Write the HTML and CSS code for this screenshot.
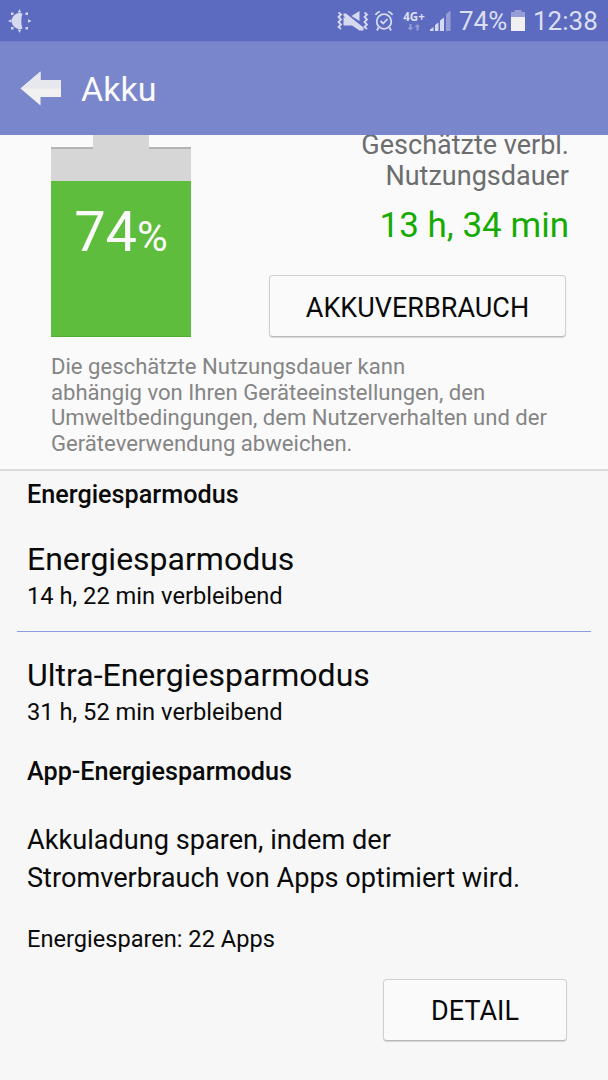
FILE: index.html
```
<!DOCTYPE html>
<html lang="de">
<head>
    <meta charset="UTF-8">
    <meta name="viewport" content="width=device-width, initial-scale=1.0">
    <title>Akku</title>
    <link rel="stylesheet" href="styles.css">
</head>
<body>
    <div class="status-bar">
        <svg class="brightness" width="24" height="24" viewBox="0 0 24 24">
            <path d="M14.500 4.500A8 8 0 1 0 14.500 19.500Q12 12 14.500 4.500Z"/>
            <path d="M11.500 0l1.700 3.500h-3.400zM11.500 24l1.700-3.500h-3.400zM0 12l3.500-1.700v3.400zM23.500 12l-3.500-1.700v3.400z"/>
            <path d="M3 3.500h2.500v2.500h-2.500zM3 18h2.500v2.500h-2.500zM17.500 3.500h2.500v2.500h-2.500zM17.500 18h2.500v2.500h-2.500z"/>
        </svg>
        <svg class="mute" width="32" height="24" viewBox="0 0 32 24">
            <path class="line" d="M1.500 3.500l2.500 2-2.500 2.500 2.500 2.500-2.500 2.500 2.500 2.500-2.500 2.500 2.500 2M27.500 3.500l2.500 2-2.500 2.500 2.500 2.500-2.500 2.500 2.500 2.500-2.500 2.500 2.500 2"/>
            <path d="M6.500 4.500H9L26.500 18.500V21.500H22.500L15 16.500H6.500V8.500H8.500L6.500 7zM22.500 2V12L14.500 7z"/>
        </svg>
        <svg class="alarm" width="20" height="24" viewBox="0 0 20 24">
            <circle class="line" cx="10" cy="12.500" r="7.300"/>
            <path class="line" d="M6.500 12l2.700 2.500 4.300-4.500M1.500 6Q2.500 3.500 6 2.500M18.500 6Q17.500 3.500 14 2.500M4.500 18.500L3 21.500M15.500 18.500L17 21.500"/>
        </svg>
        <div class="network">
            <span>4G+</span>
            <svg width="14" height="7" viewBox="0 0 14 7">
                <path d="M2.500 0h2v3.500h2l-3 3-3-3h2zM9.500 6.500h2V3h1.500l-2.500-3-3 3h2z"/>
            </svg>
        </div>
        <svg class="signal" width="22" height="22" viewBox="0 0 22 22">
            <path d="M0 21v-1.500l3.500-2.500v4zM5 21v-6l3.500-2.500V21zM10 21V10.500l4-3V21z"/>
            <path class="faint" d="M16 21V4L20.500 0.500V21z"/>
        </svg>
        <span class="percent">74%</span>
        <svg class="battery-icon" width="14" height="22" viewBox="0 0 14 22">
            <path class="faint" d="M0 2h3.500V0h7v2H14v5H0z"/>
            <path class="full" d="M0 7h14v14H0z"/>
        </svg>
        <span class="clock">12:38</span>
    </div>

    <div class="app-bar">
        <svg width="41" height="36" viewBox="0 0 41 36">
            <path d="M0.500 17.500L20.500 0.500V9H41V26H20.500V34.500z" fill="#f1f1f2"/>
            <path d="M0.500 17.500L20.500 0.500V9H41V17.500z" fill="#e7e8ee"/>
        </svg>
        <h1>Akku</h1>
    </div>

    <div class="overview">
        <div class="top">
            <div class="battery">
                <div class="cap"></div>
                <div class="body">
                    <div class="level">74<small>%</small></div>
                </div>
            </div>
            <div class="usage">
                <p class="label">Geschätzte verbl.<br>Nutzungsdauer</p>
                <p class="time">13 h, 34 min</p>
                <button class="btn btn-wide">AKKUVERBRAUCH</button>
            </div>
        </div>
        <p class="note">Die geschätzte Nutzungsdauer kann<br>abhängig von Ihren Geräteeinstellungen, den<br>Umweltbedingungen, dem Nutzerverhalten und der<br>Geräteverwendung abweichen.</p>
    </div>

    <div class="settings">
        <h2>Energiesparmodus</h2>
        <div class="item">
            <h3>Energiesparmodus</h3>
            <p>14 h, 22 min verbleibend</p>
        </div>
        <hr>
        <div class="item ultra">
            <h3>Ultra-Energiesparmodus</h3>
            <p>31 h, 52 min verbleibend</p>
        </div>
        <h2>App-Energiesparmodus</h2>
        <p class="info">Akkuladung sparen, indem der<br>Stromverbrauch von Apps optimiert wird.</p>
        <p class="apps">Energiesparen: 22 Apps</p>
        <button class="btn">DETAIL</button>
    </div>
</body>
</html>
```
FILE: styles.css
```
* {
    box-sizing: border-box;
}
body {
    margin: 0;
    height: 1080px;
    overflow: hidden;
    font-family: Roboto, sans-serif;
    background-color: #f7f7f7;
    color: #0a0a0a;
}
h1, h2, h3, p {
    margin: 0;
    font-weight: 400;
    white-space: nowrap;
}

/* Status bar */
.status-bar {
    display: flex;
    align-items: center;
    height: 41px;
    padding: 0 12px 0 8px;
    background-color: #5c6bc0;
    color: #dcdff2;
    font-size: 26px;
}
.status-bar svg {
    flex: none;
    fill: #d6daf0;
}
.status-bar .line {
    fill: none;
    stroke: #d6daf0;
    stroke-width: 1.8;
}
.status-bar .faint {
    fill: #949dd5;
}
.status-bar .full {
    fill: #f0f0f3;
}
.mute {
    margin-left: auto;
}
.alarm {
    margin-left: 5px;
}
.network {
    display: flex;
    flex-direction: column;
    align-items: center;
    width: 22px;
    margin-left: 9px;
    font: 700 11.5px/13px "Open Sans", sans-serif;
}
.network svg {
    margin-top: 1px;
    fill: #949dd5;
}
.signal {
    margin-left: 5px;
}
.percent {
    width: 48px;
    margin-left: 7px;
}
.battery-icon {
    margin-left: 4px;
}
.clock {
    width: 63px;
    margin-left: 8px;
}

/* App bar */
.app-bar {
    display: flex;
    align-items: center;
    height: 94px;
    padding-left: 20px;
    background-color: #7986cb;
    border-top: 1px solid #707dc8;
}
.app-bar h1 {
    margin-left: 20px;
    font-size: 34px;
    line-height: 40px;
    color: #fafafa;
}

/* Battery overview, scrolled under the app bar */
.overview {
    height: 336px;
    padding: 0 40px 0 51px;
    overflow: hidden;
    background-color: #fafafa;
    border-bottom: 2px solid #dcdcdc;
}
.top {
    display: flex;
    justify-content: space-between;
    height: 202px;
}
.battery {
    width: 140px;
    color: #fafafa;
}
.cap {
    width: 56px;
    height: 12px;
    margin: 0 auto 0 42px;
    background-color: #d6d6d6;
}
.body {
    height: 190px;
    padding-top: 34px;
    background: linear-gradient(#b4b4b4, #b4b4b4) 0 0 / 42px 2px no-repeat,
        linear-gradient(#b4b4b4, #b4b4b4) 100% 0 / 42px 2px no-repeat, #d6d6d6;
}
.level {
    height: 156px;
    padding-top: 18px;
    background-color: #5fbd3d;
    border-bottom: 1px solid #52ae31;
    font-size: 56px;
    line-height: 66px;
    text-align: center;
}
.level small {
    font-size: 42px;
}
.usage {
    margin: -5px -1px 0 0;
    text-align: right;
}
.label {
    font-size: 27px;
    line-height: 31px;
    color: #6b6d6f;
}
.time {
    margin-top: 13px;
    font-size: 35px;
    line-height: 41px;
    color: #16ab02;
}
.btn {
    display: block;
    width: 184px;
    height: 62px;
    margin: 26px 0 0 auto;
    padding: 3px 0 0;
    border: 1px solid #d0d0d0;
    border-bottom-color: #b8b8b8;
    border-radius: 4px;
    box-shadow: 0 1px 1px #d8d8d8;
    background-color: #fafafa;
    font-family: inherit;
    font-size: 27px;
    color: #0a0a0a;
}
.btn-wide {
    width: 297px;
    margin: 29px 3px 0 auto;
}
.note {
    margin-top: 17px;
    font-size: 22.1px;
    line-height: 25.6px;
    color: #858585;
}

/* Power saving settings */
.settings {
    padding: 10px 41px 0 27px;
}
.settings h2 {
    font-size: 25.2px;
    font-weight: 500;
    line-height: 28px;
}
.item {
    padding-top: 31px;
}
.item h3 {
    font-size: 32px;
    line-height: 38px;
}
.item p {
    margin-top: 4px;
    font-size: 23.7px;
    line-height: 28px;
}
hr {
    height: 1px;
    margin: 21px -24px 0 -10px;
    border: 0;
    background-color: #8d9be0;
}
.ultra {
    padding: 24px 0 32px;
}
.info {
    margin-top: 35px;
    font-size: 27.15px;
    line-height: 38.4px;
}
.apps {
    margin-top: 27px;
    font-size: 23.6px;
    line-height: 28px;
}
```
